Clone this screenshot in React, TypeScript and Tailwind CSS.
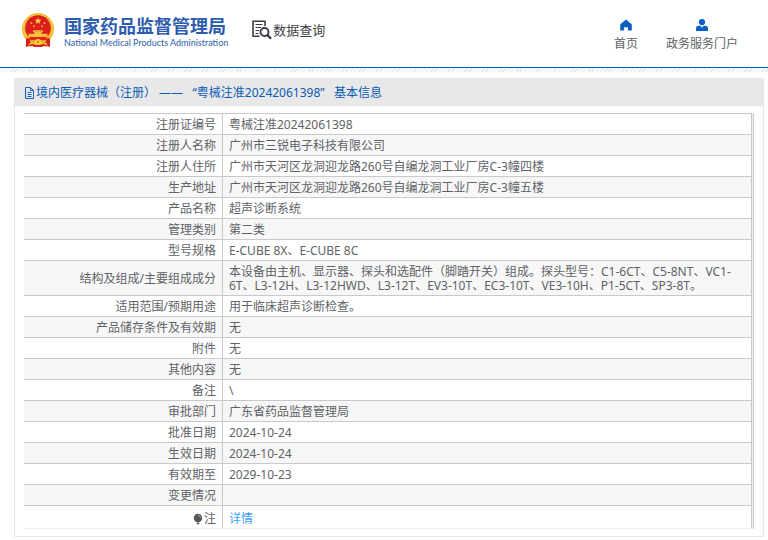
import { clsx } from "clsx";

const FONT = "font-['Noto_Sans','Noto_Sans_CJK_SC',sans-serif]";

const rows: { label: string; value: string }[] = [
  { label: "注册证编号", value: "粤械注准20242061398" },
  { label: "注册人名称", value: "广州市三锐电子科技有限公司" },
  { label: "注册人住所", value: "广州市天河区龙洞迎龙路260号自编龙洞工业厂房C-3幢四楼" },
  { label: "生产地址", value: "广州市天河区龙洞迎龙路260号自编龙洞工业厂房C-3幢五楼" },
  { label: "产品名称", value: "超声诊断系统" },
  { label: "管理类别", value: "第二类" },
  { label: "型号规格", value: "E-CUBE 8X、E-CUBE 8C" },
  {
    label: "结构及组成/主要组成成分",
    value:
      "本设备由主机、显示器、探头和选配件（脚踏开关）组成。探头型号：C1-6CT、C5-8NT、VC1-6T、L3-12H、L3-12HWD、L3-12T、EV3-10T、EC3-10T、VE3-10H、P1-5CT、SP3-8T。",
  },
  { label: "适用范围/预期用途", value: "用于临床超声诊断检查。" },
  { label: "产品储存条件及有效期", value: "无" },
  { label: "附件", value: "无" },
  { label: "其他内容", value: "无" },
  { label: "备注", value: "\\" },
  { label: "审批部门", value: "广东省药品监督管理局" },
  { label: "批准日期", value: "2024-10-24" },
  { label: "生效日期", value: "2024-10-24" },
  { label: "有效期至", value: "2029-10-23" },
  { label: "变更情况", value: "" },
];

function Emblem() {
  return (
    <svg viewBox="0 0 34 36" className="h-9 w-[34px]" aria-hidden="true">
      <path d="M5 24 L5.500 34.500 L12 34 L17 35 L22 34 L28.500 34.500 L29 24 Z" fill="#d81e1c" />
      <circle cx="17" cy="17" r="16" fill="#f0b82c" />
      <circle cx="17" cy="17" r="14.4" fill="none" stroke="#f8d85a" strokeWidth="1" strokeDasharray="2 1.2" />
      <circle cx="17" cy="16" r="12.8" fill="#dc1f1c" />
      <path d="M17 5.4l.9 2.3 2.500.1-1.900 1.600.6 2.400-2.100-1.300-2.100 1.300.6-2.400-1.900-1.600 2.500-.1z" fill="#f9d648" />
      <g fill="#f4c23c">
        <circle cx="10.4" cy="11" r=".9" />
        <circle cx="13" cy="14.2" r=".9" />
        <circle cx="21" cy="14.2" r=".9" />
        <circle cx="23.6" cy="11" r=".9" />
        <path d="M12.5 18.2h9l1 1.500h-11z" />
        <path d="M13.3 19.700h7.400v2h-7.400zM7.500 21.700h19v3.200h-19z" />
      </g>
      <path d="M5.500 26.300h23l-1 2h-21z" fill="#e3261d" />
      <path d="M8.500 28c2.500 2 5 .3 8.500.3s6 1.700 8.500-.3l2 5.800-4-1.300-3-2.300h-7l-3 2.300-4 1.300z" fill="#f0b429" />
      <path d="M5.300 26l4.500 3.200-3.300 5.300h-1.700zM28.700 26l-4.500 3.200 3.300 5.300h1.700z" fill="#d81e1c" />
      <circle cx="17" cy="30" r="3" fill="#f8cf4c" />
      <circle cx="17" cy="30" r="1.200" fill="#e0801c" />
      <path d="M13 33.200h8l1 1.800h-10z" fill="#d81e1c" />
    </svg>
  );
}

function QueryIcon() {
  return (
    <svg viewBox="0 0 20 20" className="h-5 w-5" fill="none" stroke="#3b3a4a" aria-hidden="true">
      <path d="M13 6V1.200H1v15h6.500" strokeWidth="1.600" />
      <path d="M3.500 4.500h7M3.500 7.500h5.500M3.500 10.500h3.500M3.500 13.500h3" strokeWidth="1.200" />
      <circle cx="12.500" cy="12" r="4" strokeWidth="1.900" />
      <path d="M15.500 15l3.500 3.800" strokeWidth="2.400" />
    </svg>
  );
}

function HomeIcon() {
  return (
    <svg viewBox="0 0 12 12" className="size-3" fill="#0a5fc2" aria-hidden="true">
      <path d="M6 .4L.6 4.900Q.2 5.300.2 6v5.400h3.900V8.200h3.800v3.200h3.900V6q0-.7-.4-1.100z" />
    </svg>
  );
}

function UserIcon() {
  return (
    <svg viewBox="0 0 12 12" className="size-3" fill="#0a5fc2" aria-hidden="true">
      <circle cx="6" cy="3.100" r="3.100" />
      <path d="M0 12V9.800Q0 7 2.800 6.800h1.700L6 8.800l1.500-2h1.700Q12 7 12 9.800V12z" />
    </svg>
  );
}

function DocIcon() {
  return (
    <svg viewBox="0 0 11 12" className="h-3 w-[11px]" fill="none" stroke="#1a63b8" strokeWidth="1" aria-hidden="true">
      <path d="M1.500.5h5l3 3v8h-8zM6.500.5v3h3M3.500 5.500h4M3.500 7.500h4M3.500 9.500h4" />
    </svg>
  );
}

function BulbIcon() {
  return (
    <svg viewBox="0 0 10 12" className="h-3 w-2.5" aria-hidden="true">
      <path d="M5 .8a4.200 4.200 0 0 0-2.400 7.600L3.800 9.500h2.400l1.200-1.100A4.200 4.200 0 0 0 5 .8z" fill="#55565a" />
      <path d="M3.800 10h2.400v1.300H3.800z" fill="#55565a" />
      <path d="M5.200 2.300q2 .2 2.300 2.300" fill="none" stroke="#c4c4c4" strokeWidth=".8" />
    </svg>
  );
}

const labelCell = "border-r border-b border-[#c8c9cc] px-1.5 pt-1 pb-0.5 text-right font-normal";
const valueCell = "border-r border-b border-[#c8c9cc] px-1.5 pt-1 pb-0.5 text-left";

export default function App() {
  return (
    <div className={clsx("bg-white text-xs text-[#606266]", FONT)}>
      <header className="flex items-start justify-between border-b border-[#0a5bb5] pr-[30px] pb-3.5 pl-[21px]">
        <div className="flex items-start">
          <a href="#" className="flex items-start gap-[9px] pt-3 text-[#2d5cae]">
            <Emblem />
            <span className="flex flex-col pt-1">
              <span className="text-lg leading-5 font-bold">国家药品监督管理局</span>
              <span className="font-[Lato,sans-serif] text-[9px] leading-[14px]">
                National Medical Products Administration
              </span>
            </span>
          </a>
          <div className="flex items-center gap-px pt-5 pl-6 text-[13px] leading-5 text-[#3f3f46]">
            <QueryIcon />
            <span>数据查询</span>
          </div>
        </div>
        <nav className="flex gap-7 pt-[19px] leading-[18px]">
          <a href="#" className="flex flex-col items-center gap-1">
            <HomeIcon />
            首页
          </a>
          <a href="#" className="flex flex-col items-center gap-1">
            <UserIcon />
            政务服务门户
          </a>
        </nav>
      </header>
      <div className="mt-px h-[3px] bg-[repeating-linear-gradient(135deg,#e4e6e2_0_1px,#ffffff_1px_3px)]" />

      <main className="mt-1.5 mr-1 ml-3.5 border border-t-0 border-[#e8e8e8]">
        <h1 className="flex h-7 items-center gap-px bg-[#e8e8e8] pt-0.5 pl-[9px] leading-[18px] text-[#0a5bb5]">
          <DocIcon />
          <span className="whitespace-pre">境内医疗器械（注册） ——   “粤械注准20242061398”   基本信息</span>
        </h1>
        <div className="px-[9px] pt-[7px] pb-[7px]">
          <div className="border-r border-b border-r-[#c8c9cc] border-b-[#ebeef5] bg-[#ebeef5] pr-px">
            <table className="w-full table-fixed border-separate border-spacing-0 border-t border-[#c8c9cc] bg-white leading-[14px]">
              <colgroup>
                <col className="w-[199px]" />
                <col />
              </colgroup>
              <tbody>
                {rows.map((r) => (
                  <tr key={r.label} className="even:bg-[#f7f7f7]">
                    <th scope="row" className={labelCell}>
                      {r.label}
                    </th>
                    <td className={valueCell}>{r.value}</td>
                  </tr>
                ))}
                <tr>
                  <th scope="row" className="border-r border-[#c8c9cc] px-1.5 pt-1.5 pb-0.5 font-normal">
                    <span className="flex items-center justify-end gap-px">
                      <BulbIcon />注
                    </span>
                  </th>
                  <td className="border-r border-[#c8c9cc] px-1.5 pt-1.5 pb-0.5">
                    <a href="#" className="text-[#409eff]">
                      详情
                    </a>
                  </td>
                </tr>
              </tbody>
            </table>
          </div>
        </div>
      </main>
    </div>
  );
}
